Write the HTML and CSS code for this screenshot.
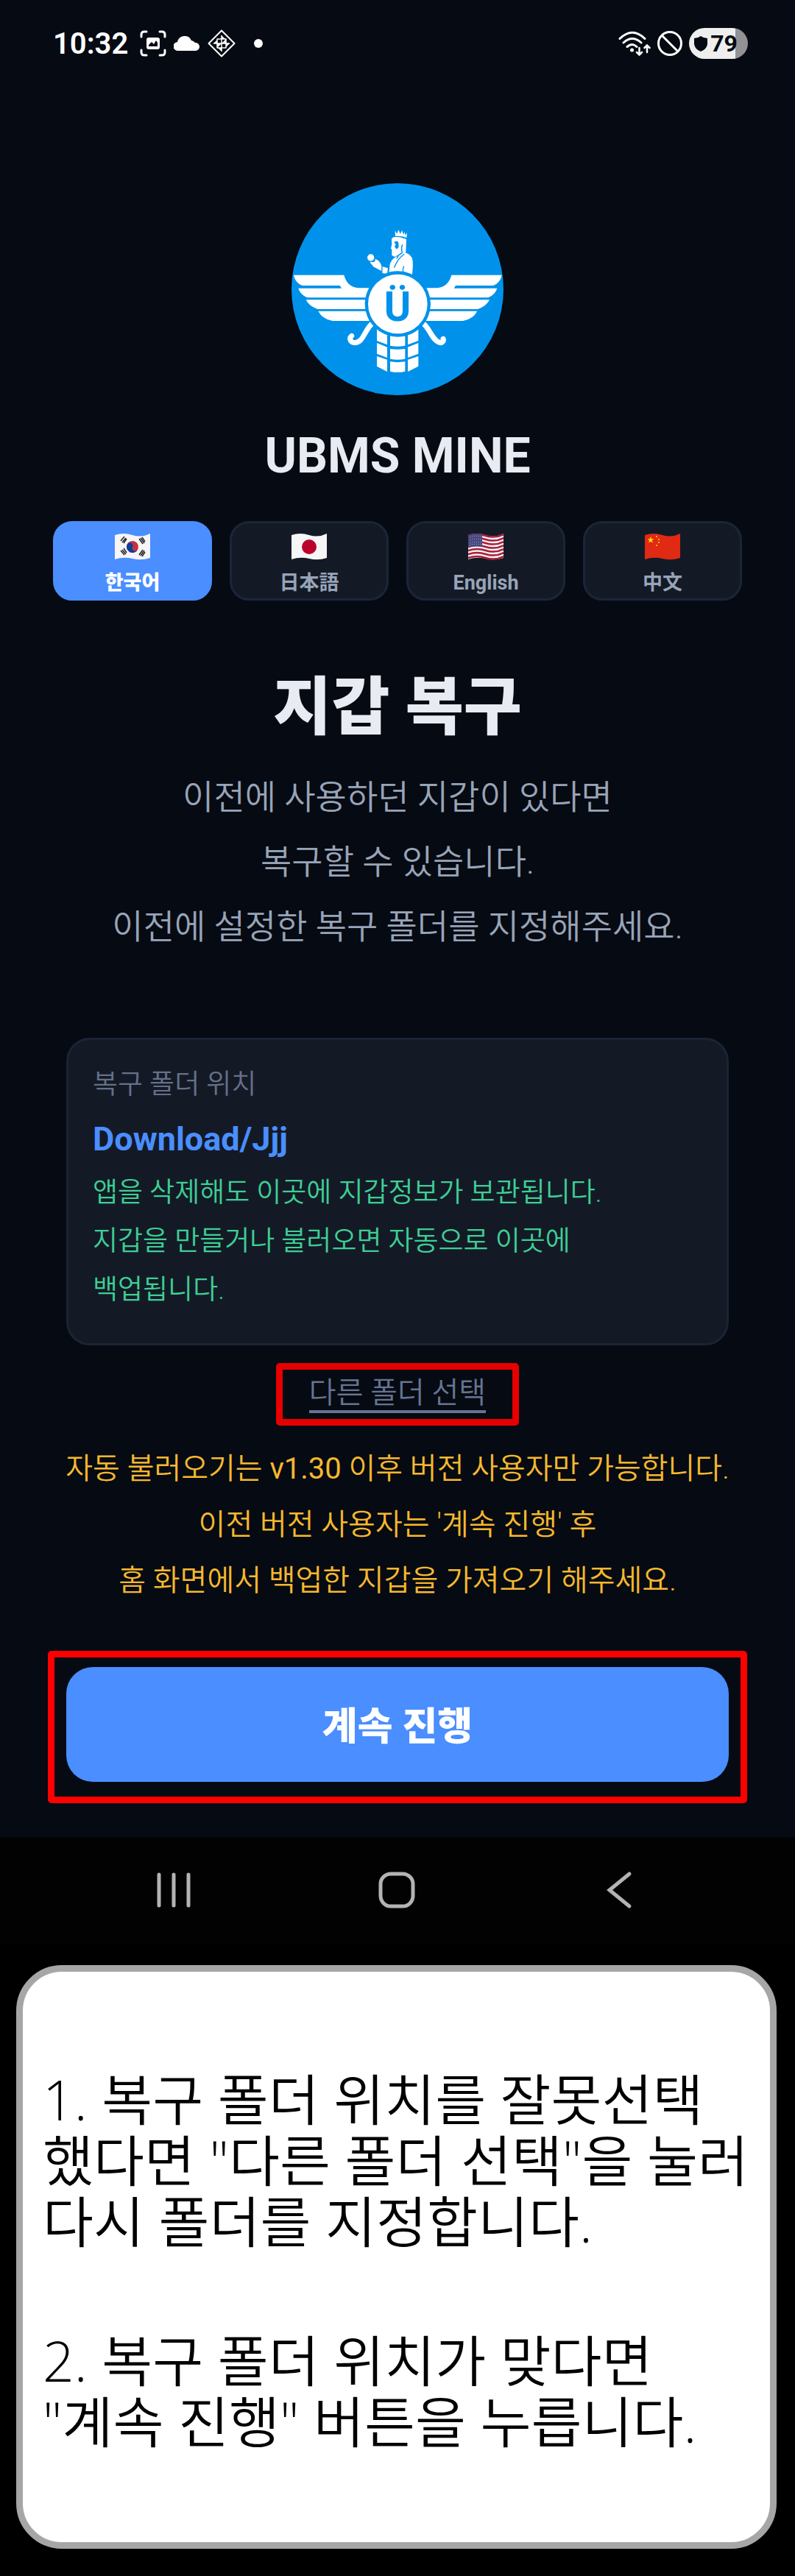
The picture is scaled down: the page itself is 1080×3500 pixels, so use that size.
FILE: index.html
```html
<!DOCTYPE html>
<html lang="ko">
<head>
    <meta charset="UTF-8">
    <meta name="viewport" content="width=device-width, initial-scale=1.0">
    <title>UBMS MINE</title>
    <link rel="stylesheet" href="styles.css">
</head>
<body>
    <div class="screen">
        <header class="status-bar">
            <div class="status-left">
                <span class="clock">10:32</span>
                <svg class="icon-shot" viewBox="0 0 36 36" fill="none" stroke="#fff" stroke-width="3" stroke-linecap="round">
                    <path d="M2 9V6q0-4 4-4h3M27 2h3q4 0 4 4v3M34 27v3q0 4-4 4h-3M9 34H6q-4 0-4-4v-3"/>
                    <rect x="9" y="10" width="18" height="16" rx="3" fill="#fff" stroke="none"/>
                    <path d="M12 22v-2l4-4 3 3 3-5 2 3v5z" fill="#060a12" stroke="none"/>
                </svg>
                <svg class="icon-cloud" viewBox="0 0 36 20" fill="#fff">
                    <path d="M6 20a6 6 0 0 1-1-12A10 10 0 0 1 24 6a8 8 0 0 1 5 3 5.500 5.500 0 0 1 1 11z"/>
                </svg>
                <svg class="icon-diamond" viewBox="0 0 38 38" fill="none" stroke="#fff" stroke-width="2" stroke-linejoin="round">
                    <path d="M19 1.500 36.500 19 19 36.500 1.500 19z"/>
                    <path d="M19 8v22M8 19h22M13 13h12v12H13z" stroke-width="1.500"/>
                    <path d="M19 8l5 5h-5zM30 19l-5 5v-5zM19 30l-5-5h5zM8 19l5-5v5zM19 19l6-6v6zM19 19l-6 6v-6z" fill="#fff" stroke="none"/>
                </svg>
                <span class="dot"></span>
            </div>
            <div class="status-right">
                <svg class="icon-wifi" viewBox="0 0 44 34" fill="none" stroke="#fff" stroke-width="3" stroke-linecap="round">
                    <path d="M2 10.500Q19-6 36 10.500M7 16q12-11 24 0M12 21.500q7-6 13 0"/>
                    <circle cx="18.500" cy="26" r="2.500" fill="#fff" stroke="none"/>
                    <path d="M28.500 23v9.500m-3.500-3.500 3.500 3.500 3.500-3.500M39 29v-9.500m-3.500 3.500 3.500-3.500 3.500 3.500" stroke-width="2.500"/>
                </svg>
                <svg class="icon-block" viewBox="0 0 36 36" fill="none" stroke="#fff" stroke-width="3">
                    <circle cx="18" cy="18" r="15.500"/>
                    <path d="M7 7l22 22"/>
                </svg>
                <span class="battery">
                    <svg class="icon-shield" viewBox="0 0 18 21" fill="#060a12">
                        <path d="M9 0q4 3 9 3v8q-1 7-9 10Q1 18 0 11V3q5 0 9-3z"/>
                    </svg>
                    79
                </span>
            </div>
        </header>

        <main>
            <div class="brand">
                <svg class="logo" viewBox="48 56 864 864" fill="#fff">
                    <circle cx="480" cy="488" r="432" fill="#0092eb"/>
                    <!-- figure -->
                    <path d="M471 272 470 249l8 13 6-17 7 17 8-14 5 17 6-12 1 15 8-10-2 20q-20-8-46-6z"/>
                    <path d="M456 287q-1-11 14-12l20 1 26 8-2 50-3 8-10-7-17 12-15 9-12-6v-24l-4-4 4-18z"/>
                    <path d="M466 296q10-8 18 0l1 20-8 9-9-10 5-10z" fill="#0092eb"/>
                    <path d="M445 424l4-38q8-23 26-31 16-4 28-18 24 1 37 24 5 20 0 66h-95z"/>
                    <path d="M508 344q-16 12-26 26-8 14-16 30M500 306q-6 16-2 30M476 364l8-12M502 420q-1-16 4-26M440 398l-4 26" fill="none" stroke="#0092eb" stroke-width="4"/>
                    <circle cx="371" cy="359" r="14"/>
                    <path d="M367 377h16q9-3 5-13 23 6 27 32l-1 17-31-16zM419 396l22 6-3 24-20-4z"/>
                    <!-- wings -->
                    <path id="wing" d="M57 430h205c8 32 28 50 60 53h43v39H112q-28-12-36-38h176l-7-11H92q-31-13-35-43zM107 531h243v38H155q-36-12-48-38zM157 577h208v40H215q-42-8-58-40z"/>
                    <use href="#wing" transform="matrix(-1 0 0 1 962 0)"/>
                    <!-- ribbons -->
                    <path d="M374 630c-28 26-34 75-67 76-19 0-26-18-14-28M588 630c26 24 36 70 66 76 12 0 15-10 12-16" fill="none" stroke="#fff" stroke-width="21" stroke-linecap="round"/>
                    <!-- tail -->
                    <path d="M396 645l42 28v41l-42-16zM396 707l42 17v43l-42-16zM396 761l42 14v49l-42-22zM450 677q30 5 61 0v41q-30 6-61 0zM450 731q30 5 61 0v41q-30 6-61 0zM450 783q30 5 61 0v40q-30 7-61 0zM565 645l-43 28v41l43-16zM565 707l-43 17v43l43-16zM565 761l-43 14v49l43-22z"/>
                    <circle cx="481" cy="548" r="134" fill="#0092eb"/>
                    <circle cx="481" cy="548" r="121"/>
                    <text x="480" y="617" class="logo-letter" text-anchor="middle">Ü</text>
                </svg>
                <h1>UBMS MINE</h1>
            </div>

            <div class="languages">
                <button class="lang active" type="button">
                    <svg class="flag" viewBox="0 0 48 36">
                        <path d="M0 2q12-4 24 0t24-2v33q-12 4-24 1T0 35z" fill="#f6f6f6"/>
                        <g transform="rotate(25 24 18)">
                            <circle cx="24" cy="18" r="8" fill="#c8313e"/>
                            <path d="M16 18a4 4 0 0 1 8 0 4 4 0 0 0 8 0 8 8 0 0 1-16 0z" fill="#0a3f9b"/>
                        </g>
                        <path d="M8 10l5-6M10 12l5-6M12 13l4-6M33 7l5 7M35 6l5 7M37 5l4 6M8 23l5 6M10 22l5 6M12 20l4 6M33 29l5-7M35 30l5-7M37 31l4-6" stroke="#222" stroke-width="1.500"/>
                    </svg>
                    <span>한국어</span>
                </button>
                <button class="lang" type="button">
                    <svg class="flag" viewBox="0 0 48 36">
                        <path d="M0 2q12-4 24 0t24-2v33q-12 4-24 1T0 35z" fill="#f6f6f6"/>
                        <circle cx="24" cy="18" r="10" fill="#bc002d"/>
                    </svg>
                    <span lang="ja">日本語</span>
                </button>
                <button class="lang" type="button">
                    <svg class="flag" viewBox="0 0 48 36">
                        <path d="M0 2q12-4 24 0t24-2v33q-12 4-24 1T0 35z" fill="#f5f0f2"/>
                        <path d="M0 3q12-4 24 0t24-2M0 8q12-4 24 0t24-2M0 13q12-4 24 0t24-2M0 18q12-4 24 0t24-2M0 23q12-4 24 0t24-2M0 28q12-4 24 0t24-2M0 33q12-4 24 0t24-2" fill="none" stroke="#a51f38" stroke-width="2.500"/>
                        <path d="M0 2q10-3 19-1v17q-10-2-19 1z" fill="#46467f"/>
                        <path d="M2 5q8-3 16-1M2 9q8-3 16-1M2 13q8-3 16-1M2 16q8-3 16-1" fill="none" stroke="#c9c9de" stroke-width="1" stroke-dasharray="1 2"/>
                    </svg>
                    <span>English</span>
                </button>
                <button class="lang" type="button">
                    <svg class="flag" viewBox="0 0 48 36">
                        <path d="M0 2q12-4 24 0t24-2v33q-12 4-24 1T0 35z" fill="#e02a14"/>
                        <path d="M8 4l1.200 3.200 3.300.1-2.600 2 .9 3.300L8 10.800l-2.800 1.800.9-3.300-2.600-2 3.300-.1z" fill="#ffd60a"/>
                        <path d="M15 3h2v2h-2zM18 7h2v2h-2zM18 11h2v2h-2zM15 15h2v2h-2z" fill="#f9b20f"/>
                    </svg>
                    <span lang="zh">中文</span>
                </button>
            </div>

            <section class="intro">
                <h2>지갑 복구</h2>
                <p>이전에 사용하던 지갑이 있다면<br>복구할 수 있습니다.<br>이전에 설정한 복구 폴더를 지정해주세요.</p>
            </section>

            <section class="folder-card">
                <p class="folder-label">복구 폴더 위치</p>
                <p class="folder-path">Download/Jjj</p>
                <p class="folder-note">앱을 삭제해도 이곳에 지갑정보가 보관됩니다.<br>지갑을 만들거나 불러오면 자동으로 이곳에<br>백업됩니다.</p>
            </section>

            <div class="highlight highlight-link">
                <a class="other-folder" href="#">다른 폴더 선택</a>
            </div>

            <p class="notice">자동 불러오기는 <span class="version">v1.30</span> 이후 버전 사용자만 가능합니다.<br>이전 버전 사용자는 '계속 진행' 후<br>홈 화면에서 백업한 지갑을 가져오기 해주세요.</p>

            <div class="highlight highlight-button">
                <button class="continue" type="button">계속 진행</button>
            </div>
        </main>
    </div>

    <nav class="nav-bar">
        <button type="button" aria-label="최근 앱">
            <svg viewBox="0 0 54 54"><path d="M7 6v42M27 6v42M47 6v42"/></svg>
        </button>
        <button type="button" aria-label="홈">
            <svg viewBox="0 0 54 54"><rect x="5" y="5" width="44" height="44" rx="14"/></svg>
        </button>
        <button type="button" aria-label="뒤로">
            <svg viewBox="0 0 54 54"><path d="M40 5 13 27l27 22"/></svg>
        </button>
    </nav>

    <aside class="guide">
        <p>1. 복구 폴더 위치를 잘못선택<br>했다면 "다른 폴더 선택"을 눌러<br>다시 폴더를 지정합니다.</p>
        <p>2. 복구 폴더 위치가 맞다면<br>"계속 진행" 버튼을 누릅니다.</p>
    </aside>
</body>
</html>
```

FILE: styles.css
```css
* {
    box-sizing: border-box;
}
body {
    margin: 0;
    background-color: #000;
    color: #e8ebf2;
    font-family: Roboto, "Noto Sans CJK KR", sans-serif;
}
h1, h2, p {
    margin: 0;
}
button {
    font-family: inherit;
    border: none;
    cursor: pointer;
}
svg {
    display: block;
    flex: none;
}
.screen {
    background-color: #060a12;
    padding-bottom: 46px;
}

/* status bar */
.status-bar {
    display: flex;
    justify-content: space-between;
    align-items: center;
    height: 118px;
    padding: 0 64px 0 72px;
    color: #fff;
}
.status-left,
.status-right {
    display: flex;
    align-items: center;
}
.status-left {
    gap: 10px;
}
.status-right {
    gap: 8px;
}
.clock {
    font-size: 40px;
    font-weight: 600;
    margin-right: 6px;
}
.icon-shot {
    width: 36px;
    height: 36px;
}
.icon-cloud {
    width: 36px;
    height: 20px;
}
.icon-diamond {
    width: 38px;
    height: 38px;
}
.dot {
    width: 12px;
    height: 12px;
    margin-left: 15px;
    border-radius: 50%;
    background-color: #fff;
}
.icon-wifi {
    width: 44px;
    height: 34px;
}
.icon-block {
    width: 36px;
    height: 36px;
}
.battery {
    display: flex;
    align-items: center;
    justify-content: center;
    gap: 4px;
    width: 80px;
    height: 42px;
    padding-right: 7px;
    border-radius: 21px;
    background: linear-gradient(to right, #eee 79%, #929294 79%);
    color: #060a12;
    font-size: 32px;
    font-weight: 700;
}
.icon-shield {
    width: 18px;
    height: 21px;
}

/* logo and title */
.brand {
    display: flex;
    flex-direction: column;
    align-items: center;
    padding-top: 131px;
}
.logo {
    width: 288px;
    height: 288px;
}
.logo-letter {
    font-size: 166px;
    font-weight: 700;
    fill: #0092eb;
}
h1 {
    margin-top: 43px;
    font-size: 66px;
    font-weight: 700;
    line-height: 80px;
}

/* language buttons */
.languages {
    display: grid;
    grid-template-columns: repeat(4, 1fr);
    gap: 24px;
    margin-top: 48px;
    padding: 0 72px;
}
.lang {
    display: flex;
    flex-direction: column;
    align-items: center;
    gap: 14px;
    padding: 14px 12px 4px;
    border: 3px solid #1c2538;
    border-radius: 26px;
    background-color: #131a26;
    color: #98a4b8;
    font-size: 27px;
    font-weight: 700;
    line-height: 34px;
}
.lang.active {
    border-color: #4a8eff;
    background-color: #4a8eff;
    color: #fff;
    font-weight: 900;
}
.flag {
    width: 48px;
    height: 36px;
}

/* intro */
.intro {
    padding: 96px 72px 0;
    text-align: center;
}
h2 {
    font-size: 86px;
    font-weight: 900;
    line-height: 100px;
}
.intro p {
    margin-top: 27px;
    color: #98a4b8;
    font-size: 46px;
    font-weight: 350;
    line-height: 88px;
}

/* folder card */
.folder-card {
    margin: 107px 90px 0;
    padding: 37px 33px 39px;
    border: 3px solid #1a2434;
    border-radius: 32px;
    background-color: #131a26;
}
.folder-label {
    color: #667088;
    font-size: 37px;
    font-weight: 350;
    line-height: 48px;
}
.folder-path {
    margin: 22px 0 12px;
    color: #4a8eff;
    font-size: 45px;
    font-weight: 700;
    line-height: 56px;
}
.folder-note {
    color: #3ecf94;
    font-size: 37px;
    font-weight: 350;
    line-height: 66px;
}

/* red boxes around the things to tap */
.highlight {
    border: 9px solid #f00;
    border-radius: 5px;
}
.highlight-link {
    width: fit-content;
    margin: 24px auto 0;
    padding: 9px 36px 8px;
    border-color: #e60000;
}
.other-folder {
    display: block;
    border-bottom: 4px solid #667492;
    color: #667492;
    font-size: 40px;
    font-weight: 350;
    line-height: 46px;
    text-decoration: none;
}
.notice {
    margin-top: 21px;
    color: #f5b82e;
    font-size: 40px;
    font-weight: 350;
    line-height: 76px;
    text-align: center;
}
.version {
    font-weight: 400;
}
.highlight-button {
    margin: 57px 65px 0;
    padding: 13px 16px 20px;
}
.continue {
    display: block;
    width: 100%;
    height: 156px;
    padding-bottom: 4px;
    border-radius: 36px;
    background-color: #4a8eff;
    color: #fff;
    font-size: 52px;
    font-weight: 900;
}

/* android navigation */
.nav-bar {
    display: grid;
    grid-template-columns: repeat(3, 1fr);
    padding: 0 86px 0 84px;
    background-color: #020203;
}
.nav-bar button {
    display: flex;
    justify-content: center;
    align-items: center;
    height: 144px;
    background: none;
}
.nav-bar svg {
    width: 54px;
    height: 54px;
    fill: none;
    stroke: #b3b3b3;
    stroke-width: 5;
    stroke-linecap: round;
}

/* instructions */
.guide {
    display: grid;
    gap: 106px;
    margin: 30px 25px 36px 22px;
    padding: 132px 20px 122px 27px;
    border: 9px solid #a6a6a6;
    border-radius: 62px;
    background-color: #fff;
    color: #000;
    font-family: "Open Sans", "Noto Sans CJK KR", sans-serif;
    font-size: 75px;
    font-weight: 350;
    line-height: 83px;
}
```
